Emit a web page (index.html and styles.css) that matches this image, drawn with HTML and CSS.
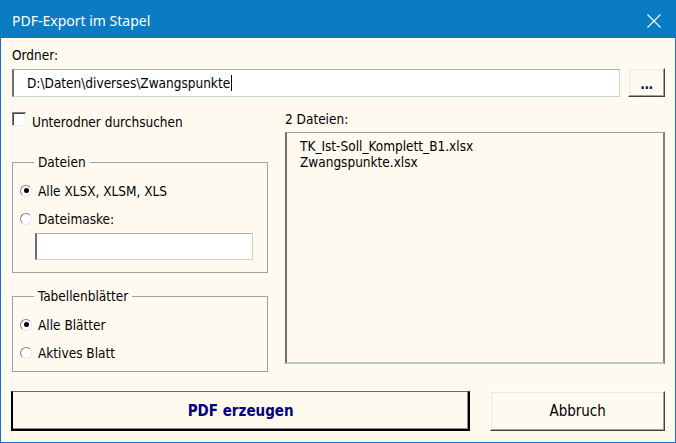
FILE: index.html
```html
<!DOCTYPE html>
<html lang="de">
<head>
<meta charset="utf-8">
<title>PDF-Export im Stapel</title>
<link rel="stylesheet" href="styles.css">
</head>
<body>
<div class="win">
  <div class="titlebar">
    <span class="title">PDF-Export im Stapel</span>
    <svg class="close" width="14" height="14" viewBox="0 0 14 14"><path d="M0.5 0.5 L13.5 13.5 M13.5 0.5 L0.5 13.5" stroke="#fff" stroke-width="1.1" fill="none"/></svg>
  </div>
  <div class="content">
    <div class="lbl ordner">Ordner:</div>
    <div class="pathrow">
      <div class="field path">D:\Daten\diverses\Zwangspunkte<span class="caret"></span></div>
      <div class="raised dots">...</div>
    </div>
    <div class="main">
      <div class="left">
        <div class="check"><span class="cbox"></span><span class="ctext">Unterodner durchsuchen</span></div>
        <fieldset class="grp g1">
          <legend>Dateien</legend>
          <div class="radio"><span class="rb on"></span>Alle XLSX, XLSM, XLS</div>
          <div class="radio"><span class="rb"></span>Dateimaske:</div>
          <div class="field mask"></div>
        </fieldset>
        <fieldset class="grp g2">
          <legend>Tabellenblätter</legend>
          <div class="radio"><span class="rb on"></span>Alle Blätter</div>
          <div class="radio"><span class="rb"></span>Aktives Blatt</div>
        </fieldset>
      </div>
      <div class="right">
        <div class="lbl files">2 Dateien:</div>
        <div class="list">
          <div class="item">TK_Ist-Soll_Komplett_B1.xlsx</div>
          <div class="item">Zwangspunkte.xlsx</div>
        </div>
      </div>
    </div>
    <div class="buttons">
      <div class="btn default">PDF erzeugen</div>
      <div class="btn raised cancel">Abbruch</div>
    </div>
  </div>
</div>
</body>
</html>
```

FILE: styles.css
```css
* { box-sizing: border-box; }
html, body { margin: 0; padding: 0; background: #fffaf0; }
body {
  width: 676px;
  height: 443px;
  overflow: hidden;
  font-family: "DejaVu Sans Condensed", "DejaVu Sans", sans-serif;
  font-size: 13.5px;
  color: #000;
}
.win {
  width: 676px;
  height: 443px;
  display: flex;
  flex-direction: column;
}
.titlebar {
  height: 38px;
  flex: none;
  background: #0a7cc3;
  display: flex;
  align-items: center;
  justify-content: space-between;
  padding: 3px 15px 0 12px;
}
.title {
  color: #fff;
  font-family: "Noto Sans", "Open Sans", sans-serif;
  font-size: 14px;
}
.close { display: block; }
.content {
  flex: 1;
  border: 1px solid #1c6fc4;
  border-top: 0;
  background: #fffaf0;
  padding: 9px 10px 11px 11px;
  display: flex;
  flex-direction: column;
}
.lbl { line-height: 16px; height: 16px; }
.pathrow {
  margin-top: 5px;
  display: flex;
  gap: 8px;
  align-items: flex-start;
}
.field {
  background: #fff;
  border-top: 1px solid #a6b4a6;
  border-left: 2px solid #707070;
  border-right: 1px solid #c4d8c4;
  border-bottom: 1px solid #c4d8c4;
}
.path {
  flex: 1;
  height: 28px;
  margin-top: 1px;
  padding-left: 13px;
  line-height: 26px;
  display: flex;
  align-items: center;
}
.caret {
  display: inline-block;
  width: 1px;
  height: 16px;
  background: #000;
  margin-left: 1px;
}
.raised {
  background: #fffaf0;
  border: 1px solid;
  border-color: #ffffff #404040 #404040 #ffffff;
  box-shadow: inset -1px -1px 0 #9aa89a, inset 1px 1px 0 #e8e8e0;
}
.dots {
  width: 37px;
  height: 29px;
  font-weight: bold;
  text-align: center;
  line-height: 30px;
  letter-spacing: -0.5px;
  color: #001040;
}
.main {
  margin-top: 12px;
  display: grid;
  grid-template-columns: 256px 380px;
  column-gap: 17px;
}
.left { display: flex; flex-direction: column; }
.check {
  height: 20px;
  display: flex;
  align-items: flex-start;
  gap: 6px;
}
.cbox {
  flex: none;
  margin-top: 3px;
  width: 14px;
  height: 14px;
  background: #fff;
  border: 1px solid;
  border-color: #808080 #f0f0f0 #f0f0f0 #808080;
  box-shadow: inset 1px 1px 0 #404040;
}
.ctext {
  margin-top: 5px;
  line-height: 16px;
}
.grp {
  margin: 0;
  border: 1px solid #a0a0a0;
  padding: 7px 6px 0 7px;
}
.grp legend {
  margin-left: 14px;
  padding: 0 4px;
  line-height: 16px;
}
.g1 { margin-top: 25px; height: 119px; }
.g2 { margin-top: 15px; height: 84px; }
.radio {
  height: 28px;
  display: flex;
  align-items: center;
  gap: 6px;
}
.rb {
  width: 12px;
  height: 12px;
  border-radius: 50%;
  background: #fff;
  border: 1px solid;
  border-color: #808080 #e8e8e8 #e8e8e8 #808080;
  display: flex;
  align-items: center;
  justify-content: center;
  margin-top: -1px;
}
.rb.on::after {
  content: "";
  width: 5px;
  height: 5px;
  border-radius: 50%;
  background: #000;
}
.mask {
  margin-left: 15px;
  width: 218px;
  height: 27px;
}
.right { display: flex; flex-direction: column; }
.files { margin-top: 2px; }
.list {
  margin-top: 5px;
  height: 232px;
  background: #fffaf0;
  border-top: 1px solid #a0a0a0;
  border-left: 2px solid #707070;
  border-right: 2px solid #808080;
  border-bottom: 2px solid #b8d0b8;
  padding: 5px 0 0 13px;
}
.item { line-height: 16px; }
.buttons {
  margin-top: auto;
  display: flex;
  gap: 20px;
  height: 40px;
  margin-left: -1px;
}
.btn {
  height: 40px;
  display: flex;
  align-items: center;
  justify-content: center;
}
.default {
  width: 460px;
  background: #fffaf0;
  border-top: 1px solid #6a6a6a;
  border-left: 2px solid #000;
  border-right: 2px solid #000;
  border-bottom: 2px solid #000;
  box-shadow: inset -1px -1px 0 #8a8a8a;
  font-weight: bold;
  color: #000080;
  font-size: 15px;
}
.cancel {
  width: 175px;
  font-size: 15px;
  color: #000;
}
```
